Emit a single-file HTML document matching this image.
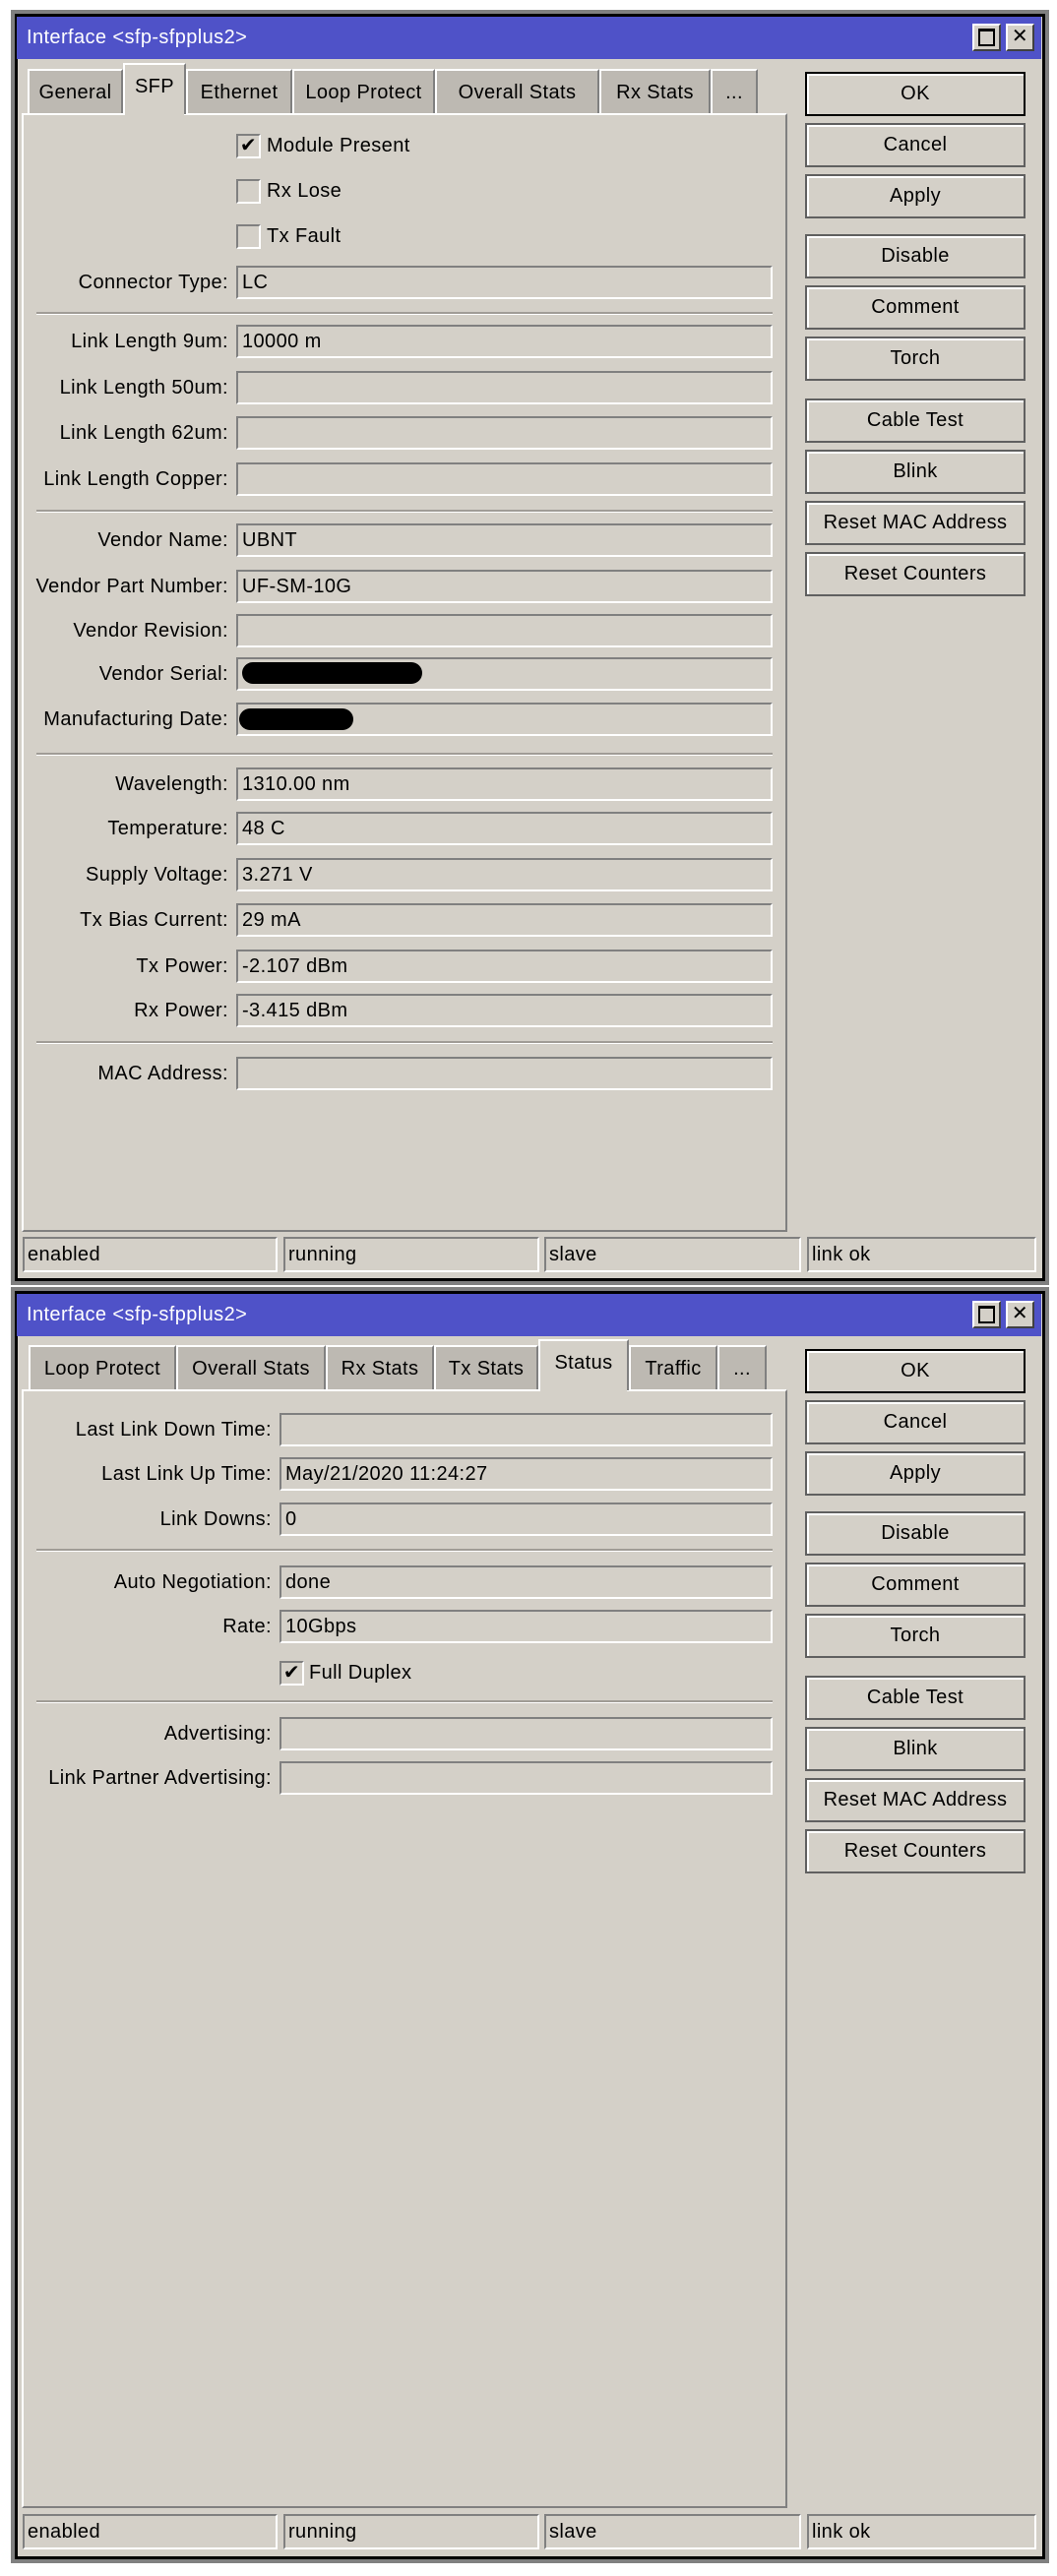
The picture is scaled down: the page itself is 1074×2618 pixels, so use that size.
<!DOCTYPE html>
<html><head><meta charset="utf-8"><style>
*{box-sizing:border-box;margin:0;padding:0}
body{width:1074px;height:2618px;background:#fff;position:relative;overflow:hidden;font-family:"Liberation Sans","DejaVu Sans",sans-serif;font-size:20px;letter-spacing:0.4px;color:#000}
.a{position:absolute}
.win{position:absolute;left:15px;width:1047px;background:#d4d0c8;border:3px solid #000;outline:4px solid #808080}
.title{position:absolute;left:17px;width:1041px;height:43px;background:#4f52c8;color:#fff;font-size:20px;line-height:43px;padding-left:10px}
.tb{position:absolute;width:29px;height:28px;background:#d4d0c8;border:2px solid;border-color:#fff #404040 #404040 #fff}
.tab{position:absolute;height:45px;background:#bdb9b2;border-top:2px solid #fff;border-left:2px solid #fff;border-right:2px solid #808080;text-align:center;line-height:44px;font-size:20px}
.tab.act{background:#d4d0c8;height:52px;line-height:44px;z-index:2}
.panel{position:absolute;left:22px;width:778px;border-top:2px solid #fff;border-left:2px solid #fff;border-right:2px solid #808080;border-bottom:2px solid #808080}
.lbl{position:absolute;text-align:right;height:34px;line-height:34px;white-space:nowrap}
.f{position:absolute;height:34px;border:2px solid;border-color:#808080 #fff #fff #808080;line-height:30px;padding-left:4px;white-space:nowrap}
.cb{position:absolute;width:25px;height:25px;border:2px solid;border-color:#808080 #fff #fff #808080}
.cbl{position:absolute;line-height:25px;white-space:nowrap}
.sep{position:absolute;height:3px;border-top:2px solid #a09c96;border-bottom:1px solid #fff}
.btn{position:absolute;left:818px;width:224px;height:45px;border:2px solid #606060;box-shadow:inset 2px 2px 0 #fff;text-align:center;line-height:40px;font-size:20px}
.btn.ok{border-color:#000}
.st{position:absolute;height:36px;border:2px solid;border-color:#808080 #fff #fff #808080;line-height:32px;padding-left:3px}
.blob{position:absolute;background:#000;border-radius:12px}
</style></head><body>

<!-- WINDOW 1 -->
<div class="win" style="top:14px;height:1288px"></div>
<div class="title" style="top:17px">Interface &lt;sfp-sfpplus2&gt;</div>
<div class="tb" style="left:988px;top:24px"><div class="a" style="left:4px;top:3px;width:17px;height:18px;border:2px solid #000;border-top-width:3px"></div></div>
<div class="tb" style="left:1022px;top:24px;font-weight:bold;font-size:20px;text-align:center;line-height:22px">✕</div>

<div class="tab" style="left:28px;top:70px;width:97px">General</div>
<div class="tab act" style="left:125px;top:64px;width:64px">SFP</div>
<div class="tab" style="left:189px;top:70px;width:108px">Ethernet</div>
<div class="tab" style="left:297px;top:70px;width:145px">Loop Protect</div>
<div class="tab" style="left:442px;top:70px;width:167px">Overall Stats</div>
<div class="tab" style="left:609px;top:70px;width:113px">Rx Stats</div>
<div class="tab" style="left:722px;top:70px;width:48px">...</div>
<div class="panel" style="top:115px;height:1137px"></div>
<div class="a" style="left:127px;top:115px;width:60px;height:3px;background:#d4d0c8;z-index:3"></div>

<div class="cb" style="left:240px;top:136px;text-align:center;font-size:20px;line-height:21px;font-weight:bold">✔</div><div class="cbl" style="left:271px;top:136px">Module Present</div>
<div class="cb" style="left:240px;top:182px"></div><div class="cbl" style="left:271px;top:182px">Rx Lose</div>
<div class="cb" style="left:240px;top:228px"></div><div class="cbl" style="left:271px;top:228px">Tx Fault</div>

<div class="lbl" style="right:842px;top:270px">Connector Type:</div><div class="f" style="left:240px;top:270px;width:545px">LC</div>
<div class="sep" style="left:37px;top:317px;width:748px"></div>
<div class="lbl" style="right:842px;top:330px">Link Length 9um:</div><div class="f" style="left:240px;top:330px;width:545px">10000 m</div>
<div class="lbl" style="right:842px;top:377px">Link Length 50um:</div><div class="f" style="left:240px;top:377px;width:545px"></div>
<div class="lbl" style="right:842px;top:423px">Link Length 62um:</div><div class="f" style="left:240px;top:423px;width:545px"></div>
<div class="lbl" style="right:842px;top:470px">Link Length Copper:</div><div class="f" style="left:240px;top:470px;width:545px"></div>
<div class="sep" style="left:37px;top:518px;width:748px"></div>
<div class="lbl" style="right:842px;top:532px">Vendor Name:</div><div class="f" style="left:240px;top:532px;width:545px">UBNT</div>
<div class="lbl" style="right:842px;top:579px">Vendor Part Number:</div><div class="f" style="left:240px;top:579px;width:545px">UF-SM-10G</div>
<div class="lbl" style="right:842px;top:624px">Vendor Revision:</div><div class="f" style="left:240px;top:624px;width:545px"></div>
<div class="lbl" style="right:842px;top:668px">Vendor Serial:</div><div class="f" style="left:240px;top:668px;width:545px"></div>
<div class="blob" style="left:246px;top:673px;width:183px;height:22px"></div>
<div class="lbl" style="right:842px;top:714px">Manufacturing Date:</div><div class="f" style="left:240px;top:714px;width:545px"></div>
<div class="blob" style="left:243px;top:720px;width:116px;height:22px"></div>
<div class="sep" style="left:37px;top:765px;width:748px"></div>
<div class="lbl" style="right:842px;top:780px">Wavelength:</div><div class="f" style="left:240px;top:780px;width:545px">1310.00 nm</div>
<div class="lbl" style="right:842px;top:825px">Temperature:</div><div class="f" style="left:240px;top:825px;width:545px">48 C</div>
<div class="lbl" style="right:842px;top:872px">Supply Voltage:</div><div class="f" style="left:240px;top:872px;width:545px">3.271 V</div>
<div class="lbl" style="right:842px;top:918px">Tx Bias Current:</div><div class="f" style="left:240px;top:918px;width:545px">29 mA</div>
<div class="lbl" style="right:842px;top:965px">Tx Power:</div><div class="f" style="left:240px;top:965px;width:545px">-2.107 dBm</div>
<div class="lbl" style="right:842px;top:1010px">Rx Power:</div><div class="f" style="left:240px;top:1010px;width:545px">-3.415 dBm</div>
<div class="sep" style="left:37px;top:1058px;width:748px"></div>
<div class="lbl" style="right:842px;top:1074px">MAC Address:</div><div class="f" style="left:240px;top:1074px;width:545px"></div>

<div class="btn ok" style="top:73px">OK</div>
<div class="btn" style="top:125px">Cancel</div>
<div class="btn" style="top:177px">Apply</div>
<div class="btn" style="top:238px">Disable</div>
<div class="btn" style="top:290px">Comment</div>
<div class="btn" style="top:342px">Torch</div>
<div class="btn" style="top:405px">Cable Test</div>
<div class="btn" style="top:457px">Blink</div>
<div class="btn" style="top:509px">Reset MAC Address</div>
<div class="btn" style="top:561px">Reset Counters</div>

<div class="st" style="left:23px;top:1257px;width:259px">enabled</div>
<div class="st" style="left:288px;top:1257px;width:260px">running</div>
<div class="st" style="left:553px;top:1257px;width:261px">slave</div>
<div class="st" style="left:820px;top:1257px;width:233px">link ok</div>

<!-- WINDOW 2 -->
<div class="win" style="top:1312px;height:1289px"></div>
<div class="title" style="top:1315px">Interface &lt;sfp-sfpplus2&gt;</div>
<div class="tb" style="left:988px;top:1322px"><div class="a" style="left:4px;top:3px;width:17px;height:18px;border:2px solid #000;border-top-width:3px"></div></div>
<div class="tb" style="left:1022px;top:1322px;font-weight:bold;font-size:20px;text-align:center;line-height:22px">✕</div>

<div class="tab" style="left:29px;top:1367px;width:150px">Loop Protect</div>
<div class="tab" style="left:179px;top:1367px;width:152px">Overall Stats</div>
<div class="tab" style="left:331px;top:1367px;width:110px">Rx Stats</div>
<div class="tab" style="left:441px;top:1367px;width:106px">Tx Stats</div>
<div class="tab act" style="left:547px;top:1361px;width:92px">Status</div>
<div class="tab" style="left:639px;top:1367px;width:90px">Traffic</div>
<div class="tab" style="left:729px;top:1367px;width:50px">...</div>
<div class="panel" style="top:1412px;height:1137px"></div>
<div class="a" style="left:549px;top:1412px;width:88px;height:3px;background:#d4d0c8;z-index:3"></div>

<div class="lbl" style="right:798px;top:1436px">Last Link Down Time:</div><div class="f" style="left:284px;top:1436px;width:501px"></div>
<div class="lbl" style="right:798px;top:1481px">Last Link Up Time:</div><div class="f" style="left:284px;top:1481px;width:501px">May/21/2020 11:24:27</div>
<div class="lbl" style="right:798px;top:1527px">Link Downs:</div><div class="f" style="left:284px;top:1527px;width:501px">0</div>
<div class="sep" style="left:37px;top:1574px;width:748px"></div>
<div class="lbl" style="right:798px;top:1591px">Auto Negotiation:</div><div class="f" style="left:284px;top:1591px;width:501px">done</div>
<div class="lbl" style="right:798px;top:1636px">Rate:</div><div class="f" style="left:284px;top:1636px;width:501px">10Gbps</div>
<div class="cb" style="left:284px;top:1688px;text-align:center;font-size:20px;line-height:21px;font-weight:bold">✔</div><div class="cbl" style="left:314px;top:1688px">Full Duplex</div>
<div class="sep" style="left:37px;top:1728px;width:748px"></div>
<div class="lbl" style="right:798px;top:1745px">Advertising:</div><div class="f" style="left:284px;top:1745px;width:501px"></div>
<div class="lbl" style="right:798px;top:1790px">Link Partner Advertising:</div><div class="f" style="left:284px;top:1790px;width:501px"></div>

<div class="btn ok" style="top:1371px">OK</div>
<div class="btn" style="top:1423px">Cancel</div>
<div class="btn" style="top:1475px">Apply</div>
<div class="btn" style="top:1536px">Disable</div>
<div class="btn" style="top:1588px">Comment</div>
<div class="btn" style="top:1640px">Torch</div>
<div class="btn" style="top:1703px">Cable Test</div>
<div class="btn" style="top:1755px">Blink</div>
<div class="btn" style="top:1807px">Reset MAC Address</div>
<div class="btn" style="top:1859px">Reset Counters</div>

<div class="st" style="left:23px;top:2555px;width:259px">enabled</div>
<div class="st" style="left:288px;top:2555px;width:260px">running</div>
<div class="st" style="left:553px;top:2555px;width:261px">slave</div>
<div class="st" style="left:820px;top:2555px;width:233px">link ok</div>
</body></html>
